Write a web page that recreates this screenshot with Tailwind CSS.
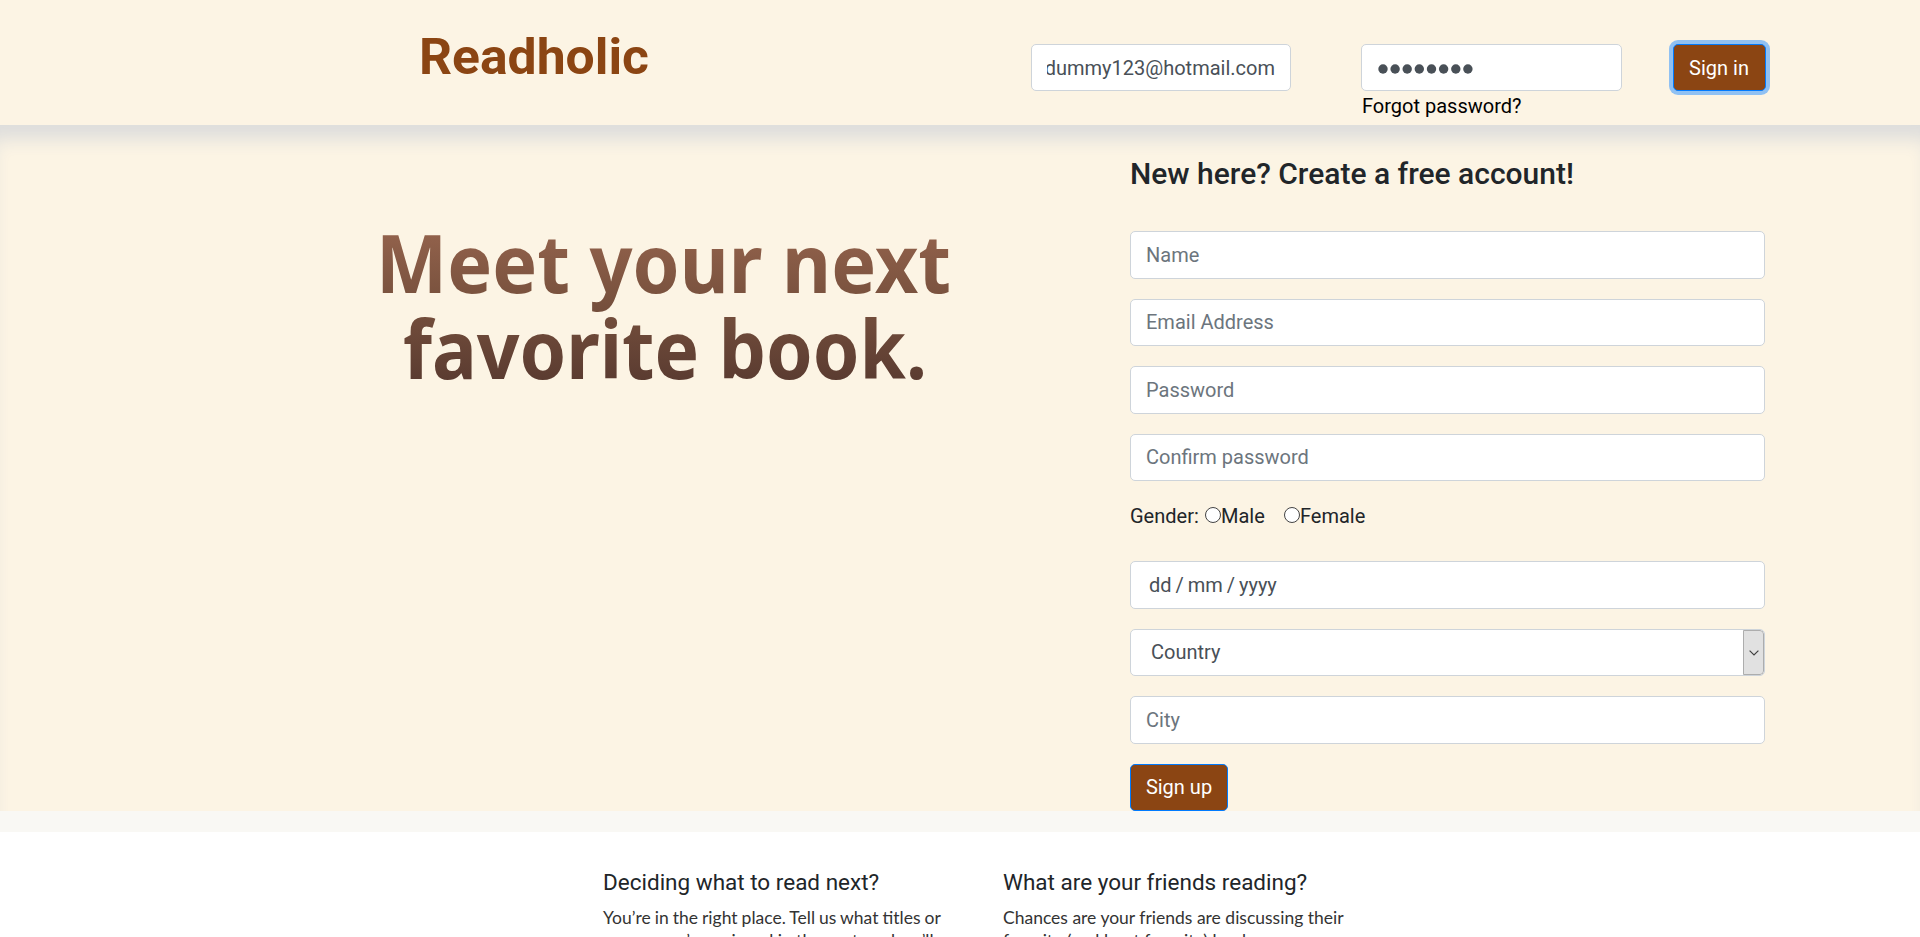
<!DOCTYPE html>
<html lang="en">
<head>
<meta charset="utf-8">
<title>Readholic</title>
<script src="https://cdn.jsdelivr.net/npm/@tailwindcss/browser@4"></script>
</head>
<body class="h-[937px] overflow-hidden bg-white font-['Roboto',sans-serif] text-[20px] leading-[30px] text-[#212529]">
<header class="flex h-[125px] items-start bg-[#fcf4e4] pl-[419px]">
  <h1 class="mt-[26px] w-[612px] text-[50px] leading-[60px] font-bold whitespace-nowrap text-[#8b4513]"><svg class="block h-[60px] w-[240px]" viewBox="0 0 240 60"><text x="0" y="48" textLength="230" lengthAdjust="spacingAndGlyphs" fill="#8b4513">Readholic</text></svg></h1>
  <div class="mt-[44px] flex h-[47px] w-[260px] items-center rounded-[5px] border border-[#ced4da] bg-white px-[15px] text-[#495057]">
    <div class="flex w-full justify-end overflow-hidden whitespace-nowrap">dummy123@hotmail.com</div>
  </div>
  <div class="mt-[44px] ml-[70px] w-[261px]">
    <div class="flex h-[47px] items-center rounded-[5px] border border-[#ced4da] bg-white pl-[16px]">
      <svg class="mt-[3px] h-[10px] w-[96px]" viewBox="0 0 96 10" fill="#495057"><circle cx="5" cy="5" r="4.7"/><circle cx="17.1" cy="5" r="4.7"/><circle cx="29.2" cy="5" r="4.7"/><circle cx="41.3" cy="5" r="4.7"/><circle cx="53.5" cy="5" r="4.7"/><circle cx="65.6" cy="5" r="4.7"/><circle cx="77.8" cy="5" r="4.7"/><circle cx="89.9" cy="5" r="4.7"/></svg>
    </div>
    <a class="block pl-px whitespace-nowrap text-black">Forgot password?</a>
  </div>
  <button class="mt-[44px] ml-[51px] h-[47px] w-[93px] rounded-[5px] border border-[#007bff] bg-[#8b4513] pr-px whitespace-nowrap text-white shadow-[0_0_0_4px_#90c1f3]">Sign in</button>
</header>
<main class="flex h-[686px] bg-[#fcf4e4] pl-[370px] shadow-[inset_0_22px_18px_-8px_#dddddc]">
  <div class="w-[760px] pt-[90px]">
    <svg class="h-[190px] w-[600px]" viewBox="370 215 600 190" font-family="Noto Sans, Open Sans, sans-serif" font-weight="700" font-size="80">
      <defs><linearGradient id="brown" gradientUnits="userSpaceOnUse" x1="0" y1="235" x2="0" y2="379"><stop offset="0" stop-color="#91614b"/><stop offset="0.4" stop-color="#7b533f"/><stop offset="1" stop-color="#5b3c31"/></linearGradient></defs>
      <text x="376" y="293" textLength="575" lengthAdjust="spacingAndGlyphs" fill="url(#brown)">Meet your next</text>
      <text x="403" y="378.500" textLength="524" lengthAdjust="spacingAndGlyphs" fill="url(#brown)">favorite book.</text>
    </svg>
  </div>
  <form class="w-[635px] pt-[31px]">
    <h2 class="h-[75.25px] text-[30px] leading-[36px] font-medium whitespace-nowrap">New here? Create a free account!</h2>
    <div class="flex flex-col gap-[20px]">
      <input class="h-[47.5px] w-full rounded-[5px] border border-[#ced4da] bg-white px-[15px] placeholder:text-[#6c757d]" placeholder="Name">
      <input class="h-[47.5px] w-full rounded-[5px] border border-[#ced4da] bg-white px-[15px] pb-px placeholder:text-[#6c757d]" placeholder="Email Address">
      <input class="h-[47.5px] w-full rounded-[5px] border border-[#ced4da] bg-white px-[15px] placeholder:text-[#6c757d]" placeholder="Password">
      <input class="h-[47.5px] w-full rounded-[5px] border border-[#ced4da] bg-white px-[15px] pb-px placeholder:text-[#6c757d]" placeholder="Confirm password">
    </div>
    <div class="mt-[20px] flex h-[60px] items-start whitespace-nowrap">
      <span class="w-[75px]">Gender:</span>
      <label class="flex w-[79px] items-center"><i class="mb-[2px] size-[16px] shrink-0 rounded-full border border-[#444] bg-white"></i>Male</label>
      <label class="flex items-center"><i class="mb-[2px] size-[16px] shrink-0 rounded-full border border-[#444] bg-white"></i>Female</label>
    </div>
    <div class="flex flex-col gap-[20px] text-[#495057]">
      <div class="flex h-[47.5px] items-center rounded-[5px] border border-[#ced4da] bg-white pl-[18px]"><span class="[word-spacing:-1px]">dd / mm / yyyy</span></div>
      <div class="flex h-[47.5px] items-center justify-between overflow-hidden rounded-[5px] border border-[#ced4da] bg-white pl-[20px]"><span class="pb-[2px]">Country</span>
        <span class="flex h-full w-[21px] items-center justify-center rounded-r-[4px] border border-[#adadad] bg-[#e1e1e1]"><svg class="h-[6px] w-[10px]" viewBox="0 0 10 6" fill="none" stroke="#444" stroke-width="1.2"><path d="M.6.6 5 5 9.4.6"/></svg></span>
      </div>
      <input class="h-[47.5px] w-full rounded-[5px] border border-[#ced4da] bg-white px-[15px] placeholder:text-[#6c757d]" placeholder="City">
      <button type="button" class="h-[47.5px] w-[98px] rounded-[5px] border border-[#007bff] bg-[#8b4513] pb-[2px] whitespace-nowrap text-white">Sign up</button>
    </div>
  </form>
</main>
<div class="h-[21px] bg-[#f9f8f4]"></div>
<section class="flex gap-[50px] pt-[37px] pl-[603px] whitespace-nowrap">
  <article class="w-[350px]">
    <h3 class="mb-[10px] text-[22.5px] leading-[27px]">Deciding what to read next?</h3>
    <p class="font-['Lato',sans-serif] text-[17.5px] leading-[23px] text-[#333]"><span class="[word-spacing:-0.45px]">You’re in the right place. Tell us what titles or</span><br>genres you’ve enjoyed in the past, and we’ll</p>
  </article>
  <article class="w-[350px]">
    <h3 class="mb-[10px] text-[22.5px] leading-[27px]">What are your friends reading?</h3>
    <p class="font-['Lato',sans-serif] text-[17.5px] leading-[23px] text-[#333]">Chances are your friends are discussing their<br>favorite (and least favorite) books on</p>
  </article>
</section>
</body>
</html>
